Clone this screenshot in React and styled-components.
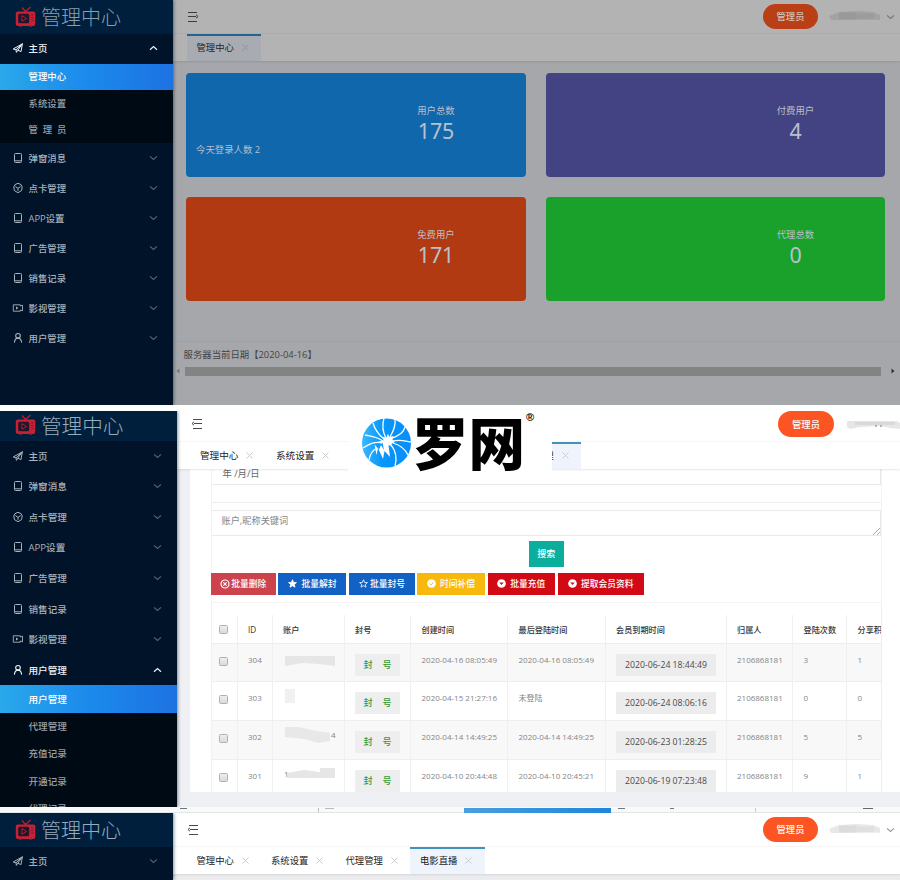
import React from "react";
import styled, { createGlobalStyle, css } from "styled-components";

const Global = createGlobalStyle`
  * { box-sizing: border-box; }
  body { margin: 0; background: #fdfefe; }
  #root { font-family: "Open Sans", "Noto Sans CJK SC", sans-serif; }
`;

const Page = styled.main`
  width: 900px;
  height: 880px;
  overflow: hidden;
  display: flex;
  flex-direction: column;
`;
const Screen = styled.section`
  position: relative;
  display: flex;
  flex: none;
  height: ${(p) => p.$h}px;
  overflow: hidden;
`;

/* ---------- sidebar ---------- */
const Side = styled.aside`
  flex: none;
  width: ${(p) => p.$w}px;
  background: #001329;
  overflow: hidden;
  font-size: ${(p) => p.$fs}px;
  position: relative;
  z-index: 2;
  box-shadow: 1px 0 3px rgba(0, 21, 41, 0.45);
`;
const Brand = styled.div`
  height: ${(p) => p.$h}px;
  background: #001f3d;
  display: flex;
  align-items: center;
  padding-left: 15px;
  gap: 5px;
  padding-bottom: ${(p) => p.$lift || 0}px;
`;
const BrandText = styled.span`
  font-family: "Noto Sans CJK SC", sans-serif;
  font-weight: 200;
  font-size: ${(p) => p.$fs}px;
  line-height: 26px;
  color: ${(p) => (p.$dim ? "#8b9db0" : "#9aabbb")};
  white-space: nowrap;
`;
const MenuRow = styled.div`
  height: ${(p) => p.$h}px;
  display: flex;
  align-items: center;
  padding: 0 15px 1px 12px;
  color: ${(p) => (p.$open ? "#f0f3f6" : "#a9b2bb")};
  font-weight: 500;
  svg:first-child { width: 12px; margin-right: 4.5px; }
  span { flex: 1; white-space: nowrap; }
  svg:last-child { opacity: ${(p) => (p.$open ? 1 : 0.5)}; }
`;
const SubList = styled.div`
  background: #000a14;
`;
const SubRow = styled.div`
  height: ${(p) => p.$h}px;
  line-height: ${(p) => p.$h}px;
  padding-left: 28.5px;
  padding-top: 0.6px;
  white-space: pre;
  color: #98a0a8;
  font-weight: 500;
  ${(p) =>
    p.$active &&
    css`
      color: #fff;
      background: linear-gradient(90deg, #29a8ea, #1b8aec 50%, #1d72e2);
    `}
`;

const Plane = () => (
  <svg width="12" height="12" viewBox="0 0 12 12" fill="none" stroke="currentColor" strokeWidth="1" strokeLinejoin="round">
    <path d="M1.2 7 10.4 1.8 9 9.6 5.8 8.2 4.4 10.4 4 7.8Z" />
    <path d="M4 7.8 10.4 1.8 5.8 8.2" />
  </svg>
);
const Tablet = () => (
  <svg width="12" height="12" viewBox="0 0 12 12" fill="none" stroke="currentColor" strokeWidth="1">
    <rect x="2.5" y="1.5" width="7" height="9" rx="1" />
    <path d="M2.5 8.8h7" />
  </svg>
);
const Cube = () => (
  <svg width="12" height="12" viewBox="0 0 12 12" fill="none" stroke="currentColor" strokeWidth="1">
    <path d="M6 1.3 9 2.6 10.2 5 9.6 8.6 6 10.7 2.4 8.6 1.8 5 3 2.6Z" strokeLinejoin="round" />
    <path d="M3.4 4.6 6 6.3 8.6 4.6M6 6.3V8.8" />
  </svg>
);
const Video = () => (
  <svg width="12" height="12" viewBox="0 0 12 12" fill="none" stroke="currentColor" strokeWidth=".9">
    <path d="M1.3 2.8h7v1.2l2.2-.8v5.6l-2.2-.8v1.2h-7Z" strokeLinejoin="round" />
    <path d="M4 4.6 6.4 6 4 7.4Z" fill="currentColor" stroke="none" />
  </svg>
);
const User = () => (
  <svg width="12" height="12" viewBox="0 0 12 12" fill="none" stroke="currentColor" strokeWidth="1.1">
    <circle cx="6" cy="3.8" r="2.3" />
    <path d="M2.4 10.6C2.6 8 4 6.2 6 6.1 8 6.2 9.4 8 9.6 10.6" />
  </svg>
);
const Chevron = ({ up, color = "currentColor" }) => (
  <svg width="9" height="8" viewBox="0 0 9 8" fill="none" stroke={color} strokeWidth="1.2">
    <path d={up ? "M1 5.8 4.5 2.6 8 5.8" : "M1 2.4 4.5 5.4 8 2.4"} />
  </svg>
);
const Tv = () => (
  <svg width="21" height="22" viewBox="0 0 21 22" fill="none">
    <path d="M7 1.5 10.5 5.5 15.5 1" stroke="#b91f31" strokeWidth="1.3" />
    <rect x=".8" y="5.5" width="19.5" height="14.5" rx="2" fill="#c62236" />
    <rect x="3.2" y="7.8" width="11" height="9.5" rx="1.5" fill="#22162c" />
    <path d="M7 9.7 11.5 12.5 7 15.2Z" fill="#120f24" stroke="#c62236" strokeWidth=".9" />
    <path d="M16.2 9h2.2M16.2 11.5h2.2M16.2 14h2.2" stroke="#6f1730" strokeWidth=".9" />
    <path d="M4 20.2h3M14 20.2h3" stroke="#911c2e" strokeWidth="1.2" />
  </svg>
);

const MENU = [
  ["主页", Plane],
  ["弹窗消息", Tablet],
  ["点卡管理", Cube],
  ["APP设置", Tablet],
  ["广告管理", Tablet],
  ["销售记录", Tablet],
  ["影视管理", Video],
  ["用户管理", User],
];

function Sidebar({ width, fs, brandH, brandFs, lift, row, sub, openName, subs = [], dim, count = 8 }) {
  return (
    <Side $w={width} $fs={fs}>
      <Brand $h={brandH} $lift={lift}>
        <Tv />
        <BrandText $fs={brandFs} $dim={dim}>管理中心</BrandText>
      </Brand>
      {MENU.slice(0, count).map(([name, Icon]) => {
        const open = name === openName;
        return (
          <React.Fragment key={name}>
            <MenuRow $h={row} $open={open}>
              <Icon />
              <span>{name}</span>
              <Chevron up={open} />
            </MenuRow>
            {open && (
              <SubList>
                {subs.map((s, i) => (
                  <SubRow key={s} $h={sub} $active={i === 0}>{s}</SubRow>
                ))}
              </SubList>
            )}
          </React.Fragment>
        );
      })}
    </Side>
  );
}

/* ---------- header and tabs ---------- */
const Main = styled.div`
  flex: 1;
  min-width: 0;
  display: flex;
  flex-direction: column;
  background: ${(p) => p.$bg};
`;
const TopBar = styled.header`
  flex: none;
  height: ${(p) => p.$h}px;
  display: flex;
  align-items: center;
  padding-left: ${(p) => p.$left}px;
  padding-bottom: ${(p) => p.$lift || 0}px;
  background: ${(p) => (p.$dim ? "#b3b3b3" : "#fff")};
  border-bottom: 1px solid ${(p) => (p.$dim ? "#adadad" : "#f7f7f7")};
`;
const Pill = styled.button`
  margin-left: auto;
  width: ${(p) => p.$w || 55}px;
  height: ${(p) => p.$h || 25}px;
  padding: 0 0 1px;
  border: 0;
  border-radius: 13px;
  font: 500 9.3px "Noto Sans CJK SC", sans-serif;
  color: ${(p) => (p.$dim ? "#d4c2b9" : "#fff")};
  background: ${(p) => (p.$dim ? "#ba3f16" : "#fc5422")};
`;
const Account = styled.div`
  display: flex;
  align-items: center;
  gap: 3px;
  width: ${(p) => p.$w}px;
  margin-left: ${(p) => p.$gap}px;
  color: ${(p) => (p.$dim ? "#777" : "#999")};
`;
const Tabs = styled.nav`
  flex: none;
  display: flex;
  height: ${(p) => p.$h}px;
  padding-left: ${(p) => p.$left}px;
  background: ${(p) => (p.$dim ? "#b3b3b3" : "#fff")};
  box-shadow: 0 1px 2px rgba(0, 0, 0, 0.1);
  position: relative;
  z-index: 1;
`;
const TabItem = styled.div`
  flex: none;
  width: ${(p) => p.$w}px;
  display: flex;
  align-items: center;
  gap: 8px;
  padding: 0 0 2.5px ${(p) => p.$indent || 10}px;
  font-size: ${(p) => p.$fs || 9.35}px;
  color: ${(p) => (p.$dim ? "#252525" : "#222")};
  border-top: 2px solid transparent;
  white-space: nowrap;
  svg { flex: none; margin-top: 1px; color: ${(p) => (p.$dim ? "#949499" : "#ccc")}; }
  ${(p) =>
    p.$active &&
    css`
      border-top-color: ${p.$dim ? "#24648f" : "#4292b9"};
      background: ${p.$dim ? "#a9abb2" : "#eff3fc"};
    `}
`;
const TabGap = styled.div`
  flex: none;
  width: ${(p) => p.$w}px;
`;
const Burger = ({ color = "#4a4a4a", flip }) => (
  <svg width="12" height="12" viewBox="0 0 12 12" fill="none" stroke={color} strokeWidth="1">
    <path d={flip ? "M1 1.5h9M1 5.5h8M1 10.5h9M9 3.8 11 5.5 9 7.2" : "M2 1.5h9M3 5.5h8M2 10.5h9M3 3.8 1 5.5 3 7.2"} />
  </svg>
);
const Close = () => (
  <svg width="7" height="7" viewBox="0 0 7 7" stroke="currentColor" strokeWidth="1">
    <path d="M.5.5 6.5 6.5M6.5.5.5 6.5" />
  </svg>
);
const Smudge = ({ dim }) => (
  <svg width="54" height="12" viewBox="0 0 54 12">
    <path d="M0 5 10 1 28 0 44 1 51 4 51 9 38 8 20 9 2 9Z" fill={dim ? "#a3a3a3" : "#e8e8e8"} />
    <path d="M10 1.500h17v7h-17z" fill={dim ? "#999" : "#dcdcdc"} />
    <path d="M27 2.500h18v6h-18z" fill={dim ? "#9c9c9c" : "#e0e0e0"} />
  </svg>
);
const WideSmudge = () => (
  <svg width="53" height="12" viewBox="0 0 53 12">
    <path d="M0 3h50l3 2v6l-10-1-10-2-20 1-10 2-3-2Z" fill="#e6e6e6" />
    <path d="M8 4h40v3h-40z" fill="#d9d9d9" />
    <path d="M28 8h2M33 8h2" stroke="#777" />
  </svg>
);

function Tab({ children, ...p }) {
  return (
    <TabItem {...p}>
      {children}
      <Close />
    </TabItem>
  );
}

/* ---------- dashboard ---------- */
const Cards = styled.div`
  display: grid;
  grid-template-columns: 339.5px 339.5px;
  grid-auto-rows: 104px;
  gap: 20px;
  padding: 12px 0 0 13px;
  height: 280px;
`;
const Card = styled.article`
  display: grid;
  grid-template-columns: 161px 178px;
  background: ${(p) => p.$bg};
  border-radius: 4px;
  color: #b9bfca;
  font-size: 9.4px;
`;
const CardNote = styled.div`
  padding: 69px 0 0 10px;
`;
const CardStat = styled.div`
  padding-top: 30px;
  text-align: center;
  line-height: 15px;
  strong {
    display: block;
    font-family: "Noto Sans", sans-serif;
    font-size: 21.4px;
    line-height: 26px;
    font-weight: 400;
    color: #b9c1cd;
  }
`;
const ServerDate = styled.div`
  height: 25px;
  border-top: 1px solid #a0a0a2;
  padding-left: 10.5px;
  line-height: 25px;
  font-size: 9.4px;
  color: #444;
`;
const ScrollBar = styled.div`
  display: flex;
  align-items: center;
  height: 10px;
  gap: 5px;
  padding-left: 3px;
  i { width: 696px; height: 9px; background: #838383; }
`;
const ArrowMark = ({ right }) => (
  <svg width="4" height="6" viewBox="0 0 4 6">
    <path d={right ? "M.5.5 3.500 3 .5 5.500Z" : "M3.500.5.5 3 3.500 5.500Z"} fill={right ? "#333" : "#777"} />
  </svg>
);

const CARDS = [
  ["用户总数", "175", "#1167ab", "今天登录人数 2"],
  ["付费用户", "4", "#434383"],
  ["免费用户", "171", "#b13a12"],
  ["代理总数", "0", "#1aa12c"],
];

/* ---------- user management ---------- */
const Body = styled.div`
  height: 323px;
  padding-left: 13px;
  background: #eff0f4;
`;
const Sheet = styled.div`
  height: 323px;
  padding: 0 18px 0 21px;
  background: #fff;
  overflow: hidden;
`;
const FormBox = styled.div`
  height: 134px;
  border: 1px solid #f3f3f3;
  border-top: 0;
  display: flex;
  flex-direction: column;
`;
const DateInput = styled.div`
  height: 16px;
  border-bottom: 1px solid #e8e8e8;
  border-right: 1px solid #e8e8e8;
  padding-left: 11px;
  line-height: 10px;
  font-size: 9.3px;
  color: #666;
`;
const Divider = styled.div`
  height: 18px;
  border-bottom: 1px solid #eee;
`;
const Keywords = styled.div`
  display: flex;
  justify-content: space-between;
  align-items: flex-end;
  margin-top: 7px;
  height: 26px;
  padding: 0 0 0 10px;
  border: 1px solid #eaeaea;
  border-left: 0;
  font-size: 9.2px;
  color: #858585;
  span { align-self: flex-start; line-height: 20px; }
`;
const Search = styled.button`
  align-self: center;
  margin: 5px 0 0 0;
  width: 35px;
  height: 26px;
  border: 0;
  padding: 0 0 1px;
  background: #0bae9c;
  color: #fff;
  font: 500 9px "Noto Sans CJK SC", sans-serif;
`;
const Actions = styled.div`
  display: flex;
  gap: 2.7px;
  margin: 6px 0 0 -1px;
`;
const Action = styled.button`
  flex: none;
  display: flex;
  align-items: center;
  justify-content: center;
  gap: ${(p) => p.$gap}px;
  width: ${(p) => p.$w}px;
  height: 22px;
  padding: 0 0 1px;
  border: 0;
  background: ${(p) => p.$bg};
  color: #fff;
  font: 500 8.75px "Noto Sans CJK SC", sans-serif;
  white-space: nowrap;
`;
const XCircle = () => (
  <svg width="10" height="10" viewBox="0 0 10 10" fill="none" stroke="#fff" strokeWidth="1.2">
    <circle cx="5" cy="5" r="4" />
    <path d="M3.4 3.4 6.6 6.6M6.6 3.4 3.4 6.6" />
  </svg>
);
const Star = ({ solid }) => (
  <svg width="9" height="9" viewBox="0 0 10 10" fill={solid ? "#fff" : "none"} stroke="#fff" strokeWidth=".9">
    <path d="M5 .8 6.2 3.8 9.4 4 7 6 7.8 9.1 5 7.4 2.2 9.1 3 6 .6 4 3.8 3.8Z" />
  </svg>
);
const Disc = ({ color, check }) => (
  <svg width="9" height="9" viewBox="0 0 10 10">
    <circle cx="5" cy="5" r="4.8" fill="#fff" />
    {check ? <path d="M2.8 5 4.6 6.6 7.2 3.7" stroke={color} fill="none" /> : <path d="M2.5 4H7.5L5 6.6Z" fill={color} />}
  </svg>
);

const TableWrap = styled.div`
  width: 671px;
  overflow: hidden;
  border-left: 1px solid #f1f1f1;
  border-right: 1px solid #ededed;
  padding-top: 12px;
`;
const Table = styled.div`
  display: grid;
  grid-template-columns: 26px 35px 72px 66.5px 97px 97.5px 121px 66.5px 54px 60px;
  width: 696px;
`;
const Cell = styled.div`
  height: ${(p) => (p.$head ? 28.5 : 38.8)}px;
  border-right: 1px solid #f0f0f0;
  border-bottom: 1px solid #eee;
  background: ${(p) => (p.$odd ? "#f8f8f8" : "#fff")};
  padding: ${(p) => (p.$head ? 9 : 10)}px 0 0 10.5px;
  font-size: ${(p) => (p.$head ? 8.15 : 8)}px;
  line-height: 12px;
  color: ${(p) => (p.$head ? "#333" : "#858585")};
  font-weight: ${(p) => (p.$head ? 500 : 400)};
  white-space: nowrap;
`;
const Check = styled.span`
  display: block;
  width: 9px;
  height: 9px;
  margin: ${(p) => (p.$head ? 0.5 : 3)}px 0 0 -3.5px;
  border: 1px solid #b0b0b0;
  border-radius: 1.5px;
  background: linear-gradient(#eee, #dadada);
`;
const Ban = styled.span`
  display: flex;
  justify-content: center;
  gap: 10px;
  width: 45px;
  height: 22px;
  line-height: 21px;
  background: #eee;
  color: #2f9a37;
  font-size: 9px;
  font-weight: 500;
`;
const Expire = styled.span`
  display: block;
  width: 100px;
  height: 22px;
  line-height: 22px;
  text-align: center;
  background: #ececec;
  color: #4a4a4a;
  font-size: 8.7px;
`;
const SMUDGES = [
  <path key="a" d="M1 2h50v10l-16-2-16-1-12 2-6 1Z" fill="#e6e6e6" />,
  <path key="b" d="M1 0h10v14H1Z" fill="#f0f0f0" />,
  <path key="c" d="M1 0h14l12 3 19 3v8l-12 2-14-4-19-2Z" fill="#e8e8e8" />,
  <path key="d" d="M3 6 20 3 36 5V1h15v10H3Z" fill="#e6e6e6" />,
];
const Masked = styled.div`
  display: flex;
  height: 16px;
  margin: ${(p) => p.$top}px 0 0 1px;
`;
const Remnant = styled.span`
  flex: none;
  width: 4px;
  margin: ${(p) => (p.$tail ? "0 0 0 -5px" : "0 -4px 0 0")};
  line-height: ${(p) => (p.$tail ? 16 : 14)}px;
`;
const HEADS = ["", "ID", "账户", "封号", "创建时间", "最后登陆时间", "会员到期时间", "归属人", "登陆次数", "分享积分"];
const ROWS = [
  ["304", {}, "2020-04-16 08:05:49", "2020-04-16 08:05:49", "2020-06-24 18:44:49", "3", "1"],
  ["303", {}, "2020-04-15 21:27:16", "未登陆", "2020-06-24 08:06:16", "0", "0"],
  ["302", { tail: "4" }, "2020-04-14 14:49:25", "2020-04-14 14:49:25", "2020-06-23 01:28:25", "5", "5"],
  ["301", { lead: "1" }, "2020-04-10 20:44:48", "2020-04-10 20:45:21", "2020-06-19 07:23:48", "9", "1"],
];
const MASK_TOP = [0, -3, -4, -3];

const Watermark = styled.div`
  position: absolute;
  z-index: 3;
  left: 348px;
  top: 0;
  width: 204px;
  height: 61px;
  background: #fff;
  display: flex;
  align-items: flex-start;
  padding: 6px 0 0 14px;
  b {
    margin: -12.5px 0 0 0;
    font: 900 56.5px/70px "Noto Sans CJK SC", sans-serif;
    color: #000;
  }
  sup {
    font: 700 11px/12px "Liberation Sans", sans-serif;
    margin: -6px 0 0 1px;
  }
`;
const Emblem = () => (
  <svg width="50" height="51" viewBox="0 0 50 51">
    <defs>
      <linearGradient id="sky" x1="0" x2="1">
        <stop offset="0" stopColor="#3cb8fb" />
        <stop offset=".4" stopColor="#0797fb" />
        <stop offset="1" stopColor="#078dfa" />
      </linearGradient>
    </defs>
    <circle cx="24.500" cy="26" r="24.5" fill="url(#sky)" />
    <g fill="none" stroke="#fff" strokeWidth="1.3">
      <path d="M24 21C20 14 20 8 22 1M28 20C31 14 34 10 33 3M31 21C36 18 41 17 43 10M31 24C38 22 43 24 49 25M31 26C38 28 43 32 46 38M29 28C34 34 35 42 33 49M22 22C17 18 13 13 11 6M21 24C14 19 7 19 3 18M20 26C12 24 6 28 1 31M15 31C11 33 8 37 7 43" />
    </g>
    <path d="M26 16.500 27.200 20 31.500 19 30.500 22.500 33 25 30 26.500 28.500 29 26.500 28 28 40 22.500 34 21 42 16 31 14.500 38 12.500 27.500 17 32.500 19 28 22 33 20.500 26 16 24.500 21.500 23.500 21 20 24.500 20.500Z" fill="#fff" />
  </svg>
);

const TaskStrip = styled.div`
  flex: none;
  height: 6px;
  display: flex;
  align-items: flex-start;
  background: #f8f9fa;
  border-bottom: 1px solid #e3e4e6;
`;
const StripPart = styled.i`
  flex: none;
  width: ${(p) => p.$w}px;
  height: ${(p) => p.$h || 1}px;
  margin-left: ${(p) => p.$gap}px;
  margin-top: ${(p) => p.$top || 0}px;
  background: ${(p) => p.$bg};
`;
const Gap = styled.div`
  flex: none;
  height: 6px;
  background: #fdfefe;
`;

export default function App() {
  return (
    <>
      <Global />
      <Page>
        <Screen $h={405}>
          <Sidebar width={173} fs={9.4} brandH={33.5} brandFs={20} row={30} sub={26.6} dim
            openName="主页" subs={["管理中心", "系统设置", "管  理  员"]} />
          <Main $bg="#a6a7aa">
            <TopBar $h={34} $left={14} $dim>
              <Burger flip color="#3d3d3d" />
              <Pill $dim>管理员</Pill>
              <Account $w={71} $gap={11} $dim><Smudge dim /><Chevron /></Account>
            </TopBar>
            <Tabs $h={27} $left={13.5} $dim>
              <Tab $w={74.5} $active $dim>管理中心</Tab>
            </Tabs>
            <Cards>
              {CARDS.map(([label, n, bg, note]) => (
                <Card key={label} $bg={bg}>
                  <CardNote>{note}</CardNote>
                  <CardStat>{label}<strong>{n}</strong></CardStat>
                </Card>
              ))}
            </Cards>
            <ServerDate>服务器当前日期【2020-04-16】</ServerDate>
            <ScrollBar><ArrowMark /><i /><span /><ArrowMark right /></ScrollBar>
          </Main>
        </Screen>
        <Gap />
        <Screen $h={396}>
          <Sidebar width={176.5} fs={9.6} brandH={30} brandFs={20.6} lift={2} row={30.55} sub={27.2}
            openName="用户管理" subs={["用户管理", "代理管理", "充值记录", "开通记录", "代理记录"]} />
          <Main $bg="#eff0f4">
            <TopBar $h={31} $left={14} $lift={4}>
              <Burger />
              <Pill $w={56} $h={26}>管理员</Pill>
              <Account $w={53} $gap={13}><WideSmudge /></Account>
            </TopBar>
            <Tabs $h={27} $left={13.5}>
              <Tab $w={76} $fs={9.6}>管理中心</Tab>
              <Tab $w={76} $fs={9.6}>系统设置</Tab>
              <TabGap $w={162.5} />
              <Tab $w={76} $fs={9.6} $indent={39.5} $active>理</Tab>
            </Tabs>
            <Body>
              <Sheet>
                <FormBox>
                  <DateInput>年 /月/日</DateInput>
                  <Divider />
                  <Keywords>
                    <span>账户,昵称关键词</span>
                    <svg width="7" height="7" viewBox="0 0 7 7" stroke="#aaa"><path d="M0 7 7 0M4 7 7 4" /></svg>
                  </Keywords>
                  <Search>搜索</Search>
                  <Actions>
                    <Action $w={65.3} $bg="#cd434d" $gap={1}><XCircle />批量删除</Action>
                    <Action $w={68} $bg="#1261c4" $gap={4}><Star solid />批量解封</Action>
                    <Action $w={65.5} $bg="#1261c4" $gap={2}><Star />批量封号</Action>
                    <Action $w={67.5} $bg="#f8b90e" $gap={4}><Disc check color="#f8b90e" />时间补偿</Action>
                    <Action $w={67.5} $bg="#d20a15" $gap={4}><Disc color="#d20a15" />批量充值</Action>
                    <Action $w={86} $bg="#d20a15" $gap={4}><Disc color="#d20a15" />提取会员资料</Action>
                  </Actions>
                </FormBox>
                <TableWrap>
                  <Table>
                    {HEADS.map((h, i) => (
                      <Cell key={i} $head>{i ? h : <Check $head />}</Cell>
                    ))}
                    {ROWS.map((r, i) => {
                      const odd = i % 2 === 0;
                      return (
                        <React.Fragment key={r[0]}>
                          <Cell $odd={odd}><Check /></Cell>
                          <Cell $odd={odd}>{r[0]}</Cell>
                          <Cell $odd={odd}>
                            <Masked $top={MASK_TOP[i]}>
                              {r[1].lead && <Remnant>{r[1].lead}</Remnant>}
                              <svg width="52" height="16" viewBox="0 0 52 16">{SMUDGES[i]}</svg>
                              {r[1].tail && <Remnant $tail>{r[1].tail}</Remnant>}
                            </Masked>
                          </Cell>
                          <Cell $odd={odd}><Ban><span>封</span><span>号</span></Ban></Cell>
                          <Cell $odd={odd}>{r[2]}</Cell>
                          <Cell $odd={odd}>{r[3]}</Cell>
                          <Cell $odd={odd}><Expire>{r[4]}</Expire></Cell>
                          <Cell $odd={odd}>2106868181</Cell>
                          <Cell $odd={odd}>{r[5]}</Cell>
                          <Cell $odd={odd}>{r[6]}</Cell>
                        </React.Fragment>
                      );
                    })}
                  </Table>
                </TableWrap>
              </Sheet>
            </Body>
          </Main>
          <Watermark>
            <Emblem />
            <b>罗网</b>
            <sup>®</sup>
          </Watermark>
        </Screen>
        <TaskStrip>
          <StripPart $gap={180} $w={7} $top={1} $bg="#6b7680" />
          <StripPart $gap={131} $w={1} $h={4} $top={1} $bg="#bbb" />
          <StripPart $gap={6} $w={9} $top={1} $bg="#bbb" />
          <StripPart $gap={130} $w={147} $h={5} $top={1} $bg="linear-gradient(90deg,#4a9fe0,#1c86dd)" />
          <StripPart $gap={7} $w={7} $top={1} $bg="#777" />
          <StripPart $gap={45} $w={4} $top={1} $bg="#777" />
          <StripPart $gap={81} $w={1} $h={4} $top={1} $bg="#ccc" />
          <StripPart $gap={107} $w={10} $top={1} $bg="#666" />
        </TaskStrip>
        <Screen $h={67}>
          <Sidebar width={173} fs={9.4} brandH={34} brandFs={20} row={29} sub={26.6} count={2} />
          <Main $bg="#ececee">
            <TopBar $h={34} $left={14}>
              <Burger />
              <Pill>管理员</Pill>
              <Account $w={71} $gap={11}><Smudge /><Chevron /></Account>
            </TopBar>
            <Tabs $h={27} $left={13.5}>
              <Tab $w={74.5}>管理中心</Tab>
              <Tab $w={74.5}>系统设置</Tab>
              <Tab $w={74.5}>代理管理</Tab>
              <Tab $w={74.5} $active>电影直播</Tab>
            </Tabs>
          </Main>
        </Screen>
      </Page>
    </>
  );
}
